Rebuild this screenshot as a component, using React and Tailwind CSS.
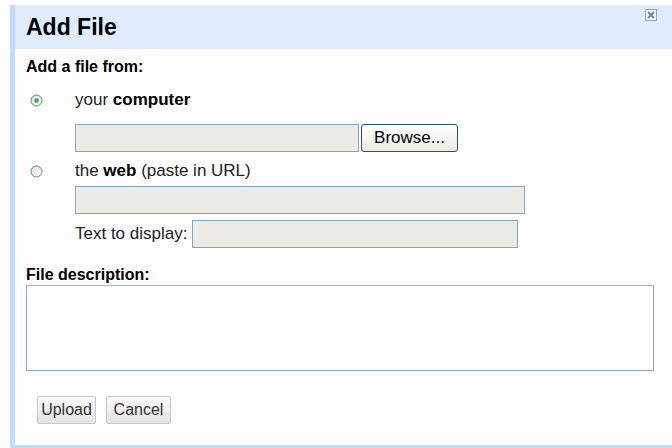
import React from "react";

function Radio({ checked, id }) {
  return (
    <svg width="13" height="13" viewBox="0 0 13 13" className="shrink-0">
      <defs>
        <linearGradient id={id} x1="0" y1="0" x2="1" y2="1">
          <stop offset="0" stopColor="#dcdcd6" />
          <stop offset="1" stopColor="#ffffff" />
        </linearGradient>
      </defs>
      <circle cx="6.5" cy="6.5" r="5.5" fill={`url(#${id})`} stroke="#5e7fa3" strokeWidth="1" />
      {checked && <circle cx="6.5" cy="6.5" r="2.2" fill="#2fb52f" />}
    </svg>
  );
}

function Field({ className }) {
  return <div className={`h-[28px] bg-[#ecebe6] border border-[#86a3c2] ${className}`} />;
}

const grayButton =
  "h-[28px] border border-[#c8c8c8] rounded-[2px] bg-gradient-to-b from-[#fbfbfb] to-[#e4e4e4] text-[16px] text-[#333] flex items-center justify-center";

export default function App() {
  return (
    <div className="w-[672px] h-[448px] bg-[#fdfdfd] flex flex-col pt-[5px] pl-[10px] text-[17px] text-[#222] font-['Liberation_Sans',Arial,sans-serif]">
      <div className="flex-1 flex flex-col border-l-[5px] border-b-[3px] border-[#c3d9ff]">
        <div className="h-[44px] shrink-0 bg-[#e0ecff] flex items-start justify-between pl-[11px] pr-[15px]">
          <span className="text-[23px] leading-[44px] font-bold text-black">Add File</span>
          <svg width="12" height="12" viewBox="0 0 12 12" className="mt-[4px]">
            <rect x="0.5" y="0.5" width="11" height="11" fill="#f4f8ff" stroke="#8aa4c8" />
            <path d="M3 3 L9 9 M9 3 L3 9" stroke="#6b89b1" strokeWidth="2" />
          </svg>
        </div>
        <div className="flex flex-col pl-[11px] pr-[18px]">
          <div className="h-[36px] flex items-center text-[16px] font-bold text-black">Add a file from:</div>
          <div className="h-[24px] mt-[3px] flex items-center pl-[4px]">
            <Radio checked id="radio-computer" />
            <span className="ml-[32px]">your <b className="text-black">computer</b></span>
          </div>
          <div className="flex items-center mt-[12px] pl-[49px] gap-[2px]">
            <Field className="w-[284px]" />
            <button className="h-[28px] w-[97px] rounded-[3px] border border-[#2b4f7a] bg-gradient-to-b from-[#ffffff] to-[#ecebe5] text-[17px] text-black">
              Browse...
            </button>
          </div>
          <div className="h-[24px] mt-[7px] flex items-center pl-[4px]">
            <Radio id="radio-web" />
            <span className="ml-[32px]">the <b className="text-black">web</b> (paste in URL)</span>
          </div>
          <div className="pl-[49px] mt-[3px]">
            <Field className="w-[450px]" />
          </div>
          <div className="flex items-center pl-[49px] mt-[6px]">
            <span className="w-[117px]">Text to display:</span>
            <Field className="w-[326px]" />
          </div>
          <div className="h-[19px] mt-[17px] flex items-center text-[16px] font-bold text-black">File description:</div>
          <div className="h-[86px] mt-[1px] border border-[#8fa9c6] border-t-[#a7b8cc] bg-white" />
          <div className="flex gap-[10px] mt-[25px] pl-[11px]">
            <button className={`${grayButton} w-[59px]`}>Upload</button>
            <button className={`${grayButton} w-[65px]`}>Cancel</button>
          </div>
        </div>
      </div>
    </div>
  );
}
